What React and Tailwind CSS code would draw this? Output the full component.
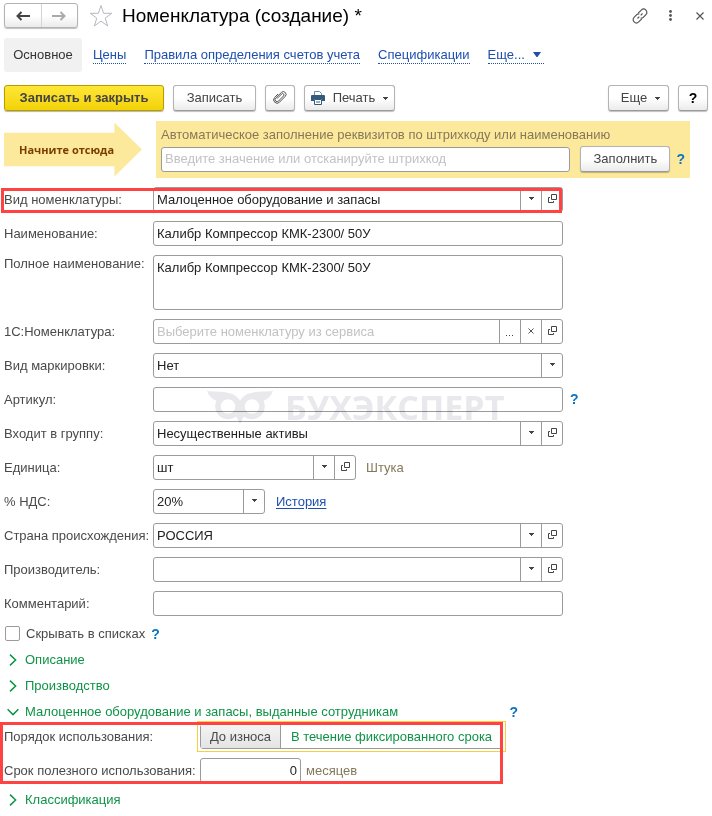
import React, { useState } from 'react';

const FIELD = 'flex h-[25px] rounded-[3px] border border-[#9b9b9b] bg-white overflow-hidden';
const BUTTON =
  'flex h-[26px] items-center justify-center rounded-[3px] border border-[#b3b3b3] border-b-[#9a9a9a] bg-linear-to-b from-white from-50% to-[#ebebeb] text-[#444] shadow-[0_1px_1px_rgba(0,0,0,0.25)]';

const SmallArrow = () => (
  <svg width="5" height="3" viewBox="0 0 5 3" aria-hidden="true">
    <path d="M0 0h5v1H4v1H3v1H2V2H1V1H0z" fill="#444" />
  </svg>
);

const OpenIcon = () => (
  <svg width="9" height="9" viewBox="0 0 9 9" fill="none" stroke="#444" aria-hidden="true">
    <path d="M3.5.5h5v5h-5z" />
    <path d="M2 3.500H.5v5h5V7" />
  </svg>
);

const Help = ({ className = '' }) => (
  <button type="button" aria-label="Справка" className={`text-[14px] font-bold text-[#0b74c4] ${className}`}>
    ?
  </button>
);

// Кнопка внутри поля ввода
const Cell = ({ label, children }) => (
  <button
    type="button"
    aria-label={label}
    className="flex h-full w-[21px] shrink-0 items-center justify-center border-l border-[#9b9b9b] pb-0.5"
  >
    {children}
  </button>
);

const Row = ({ id, label, multiline, children }) => (
  <div className="flex min-h-[25px] items-start">
    <label
      htmlFor={id}
      className={`w-[149px] shrink-0 whitespace-nowrap ${multiline ? 'leading-[18px]' : 'leading-[25px]'}`}
    >
      {label}
    </label>
    {children}
  </div>
);

const TextField = ({ id, value = '' }) => (
  <div className={`${FIELD} min-w-0 flex-1`}>
    <input id={id} defaultValue={value} className="w-full min-w-0 px-[3px] text-[#222] outline-none" />
  </div>
);

const SelectField = ({ id, value = '', open, className = 'min-w-0 flex-1' }) => (
  <div className={`${FIELD} ${className}`}>
    <div className="grid min-w-0 flex-1 grid-cols-[1fr_21px]">
      <select
        id={id}
        defaultValue={value}
        className="col-span-2 col-start-1 row-start-1 min-w-0 appearance-none bg-transparent pl-[3px] text-[#222] outline-none"
      >
        <option>{value}</option>
      </select>
      <span className="pointer-events-none col-start-2 row-start-1 flex items-center justify-center border-l border-[#9b9b9b] pb-0.5">
        <SmallArrow />
      </span>
    </div>
    {open && (
      <Cell label="Открыть">
        <OpenIcon />
      </Cell>
    )}
  </div>
);

const Group = ({ title, opened, onClick }) => (
  <button type="button" onClick={onClick} className="flex h-[26px] items-center text-[#0f9347]">
    <span className="flex w-[21px] justify-start pl-[3px]">
      {opened ? (
        <svg width="12" height="8" viewBox="0 0 12 8" fill="none" stroke="currentColor" strokeWidth="1.5" aria-hidden="true">
          <path d="M.6 1.2 6 6.6l5.4-5.4" />
        </svg>
      ) : (
        <svg width="12" height="12" viewBox="0 0 12 12" fill="none" stroke="currentColor" strokeWidth="1.5" aria-hidden="true">
          <path d="M3 .6 8.6 6 3 11.4" />
        </svg>
      )}
    </span>
    {title}
  </button>
);

const Watermark = () => (
  <div
    aria-hidden="true"
    className="pointer-events-none absolute top-[3px] left-[203px] flex items-center gap-3 text-[#e8e8ed] mix-blend-multiply"
  >
    <svg width="66" height="34" viewBox="0 0 66 34" fill="currentColor">
      <circle cx="21" cy="16.5" r="10" fill="none" stroke="currentColor" strokeWidth="5.5" />
      <circle cx="45" cy="16.5" r="10" fill="none" stroke="currentColor" strokeWidth="5.5" />
      <path d="M0 1c8 1 15 0 22 2 5 1 9 4 11 8 2-4 6-7 11-8 7-2 14-1 22-2-2 5-5 8-10 10L45 6.500c-5 0-9 4-9 9h-6c0-5-4-9-9-9L10 11C5 9 2 6 0 1z" />
      <path d="M28 24l5-5 5 5-5 10z" />
    </svg>
    <span className="font-['Open_Sans',sans-serif] text-[34px] leading-[34px] font-bold">БУХЭКСПЕРТ</span>
  </div>
);

const tabs = ['Цены', 'Правила определения счетов учета', 'Спецификации'];

export default function App() {
  const [usage, setUsage] = useState('wear');
  const [opened, setOpened] = useState(true);

  return (
    <main className="bg-white px-1 pt-[3px] pb-1 font-['Liberation_Sans',Arial,sans-serif] text-[13px] leading-[16px] text-[#4a4a4a]">
      {/* Заголовок */}
      <header className="flex h-[25px] items-center">
        <div className="flex h-[25px] w-[74px] rounded-[3px] border border-[#b3b3b3] bg-linear-to-b from-white from-50% to-[#ebebeb] shadow-[0_1px_1px_rgba(0,0,0,0.25)]">
          <button type="button" aria-label="Назад" className="flex flex-1 items-center justify-center border-r border-[#d5d5d5]">
            <svg width="14" height="10" viewBox="0 0 14 10" fill="none" stroke="#444" strokeWidth="2" aria-hidden="true">
              <path d="M14 5H2M5.5 1 1.5 5l4 4" />
            </svg>
          </button>
          <button type="button" aria-label="Вперед" className="flex flex-1 items-center justify-center">
            <svg width="14" height="10" viewBox="0 0 14 10" fill="none" stroke="#aaa" strokeWidth="2" aria-hidden="true">
              <path d="M0 5h12M8.5 1l4 4-4 4" />
            </svg>
          </button>
        </div>
        <button type="button" aria-label="В избранное" className="ml-[11px]">
          <svg width="24" height="24" viewBox="0 0 24 24" fill="none" stroke="#b4b8be" aria-hidden="true">
            <path d="m12 1.5 2.600 7.800h8.200l-6.600 4.800 2.500 7.900-6.700-4.900L5.300 22l2.500-7.900L1.200 9.300h8.200z" />
          </svg>
        </button>
        <h1 className="ml-[9px] flex-1 text-[19px] text-black">Номенклатура (создание) *</h1>
        <div className="flex items-center">
          <button type="button" aria-label="Получить ссылку">
            <svg width="16" height="16" viewBox="0 0 16 16" fill="none" stroke="#555" strokeWidth="1.200" aria-hidden="true">
              <path d="M6.200 5.200 9.300 2.100a3.200 3.200 0 0 1 4.600 4.600l-2.600 2.600a3.200 3.200 0 0 1-2.600.9" />
              <path d="M9.800 10.800 6.700 13.900a3.200 3.200 0 0 1-4.600-4.600l2.600-2.600a3.200 3.200 0 0 1 2.600-.9" />
              <path d="m5.500 10.500 1.800-1.800M8.700 7.300l1.800-1.800" />
            </svg>
          </button>
          <button type="button" aria-label="Меню" className="ml-[21px]">
            <svg width="3" height="11" viewBox="0 0 3 11" fill="#555" aria-hidden="true">
              <circle cx="1.5" cy="1.5" r="1.400" />
              <circle cx="1.5" cy="5.500" r="1.400" />
              <circle cx="1.5" cy="9.500" r="1.400" />
            </svg>
          </button>
          <button type="button" aria-label="Закрыть" className="mr-1 ml-6">
            <svg width="8" height="8" viewBox="0 0 8 8" stroke="#555" strokeWidth="1.200" aria-hidden="true">
              <path d="m.5.5 7 7M7.500.5l-7 7" />
            </svg>
          </button>
        </div>
      </header>

      {/* Навигация */}
      <nav className="mt-[10px] flex h-[34px] items-center">
        <a href="#main" className="flex h-full w-[78px] items-center justify-center rounded-[3px] bg-[#f1f1f1] text-[#333]">
          Основное
        </a>
        <div className="ml-[11px] flex gap-[18px] text-[#1d4fb0]">
          {tabs.map((tab) => (
            <a key={tab} href="#tab" className="border-b border-dotted border-[#1d4fb0]">
              {tab}
            </a>
          ))}
          <a href="#more" className="flex items-center gap-2 border-b border-dotted border-[#1d4fb0] pr-[3px]">
            Еще...
            <svg width="8" height="5" viewBox="0 0 8 5" fill="currentColor" aria-hidden="true">
              <path d="M0 0h8L4.500 5h-1z" />
            </svg>
          </a>
        </div>
      </nav>

      {/* Командная панель */}
      <div className="mt-[13px] flex items-center">
        <button
          type="button"
          className="h-[26px] w-[160px] rounded-[3px] border border-[#b79d00] bg-linear-to-b from-[#ffe733] to-[#f2d200] font-bold text-[#444] shadow-[0_1px_1px_rgba(0,0,0,0.3)]"
        >
          Записать и закрыть
        </button>
        <button type="button" className={`${BUTTON} ml-[9px] w-[83px]`}>
          Записать
        </button>
        <button type="button" aria-label="Присоединенные файлы" className={`${BUTTON} ml-[9px] w-[30px]`}>
          <svg width="14" height="14" viewBox="0 0 14 14" fill="none" stroke="#555" aria-hidden="true">
            <path d="M4 7.600 8.600 3a1.300 1.300 0 0 1 2 1.900l-5 5.100a2 2 0 0 1-3-2.800l5.700-5.700a2.700 2.700 0 0 1 4 3.800l-5.800 5.900a3.400 3.400 0 0 1-5-4.600L5 3" />
          </svg>
        </button>
        <button type="button" className={`${BUTTON} ml-[9px] w-[91px] gap-2`}>
          <svg width="14" height="14" viewBox="0 0 14 14" aria-hidden="true">
            <path d="M3.500 5V.5h5l2 2V5" fill="#fff" stroke="#6f8aa3" />
            <path d="M1 4h12a1 1 0 0 1 1 1v5h-3V8H3v2H0V5a1 1 0 0 1 1-1z" fill="#34597d" />
            <path d="M3.500 8.500h7v5h-7z" fill="#fff" stroke="#34597d" />
            <path d="M5 11h4" stroke="#34597d" />
          </svg>
          <span>Печать</span>
          <SmallArrow />
        </button>
        <button type="button" className={`${BUTTON} ml-auto w-[61px] gap-2 pl-1`}>
          <span>Еще</span>
          <SmallArrow />
        </button>
        <button type="button" className={`${BUTTON} ml-[9px] w-[30px] text-[14px] font-bold text-black`}>
          ?
        </button>
      </div>

      {/* Автозаполнение */}
      <section className="mt-[10px] flex items-center gap-[14px]">
        <div className="flex h-[54px] w-[138px] shrink-0 items-center bg-[#fde99b] pl-[15px] font-['Open_Sans',sans-serif] text-[11px] font-bold text-[#7a3d00] [clip-path:polygon(0_19%,80%_19%,80%_0,100%_50%,80%_100%,80%_81%,0_81%)]">
          Начните отсюда
        </div>
        <div className="h-[57px] max-w-[534px] flex-1 bg-[#fde99b] px-[5px] pt-[6px] text-[#85795a]">
          <label htmlFor="barcode" className="block whitespace-nowrap">
            Автоматическое заполнение реквизитов по штрихкоду или наименованию
          </label>
          <div className="mt-[3px] flex items-center">
            <div className={`${FIELD} min-w-0 flex-1`}>
              <input
                id="barcode"
                placeholder="Введите значение или отсканируйте штрихкод"
                className="w-full px-[3px] outline-none placeholder:text-[#c2c2c2]"
              />
            </div>
            <button type="button" className={`${BUTTON} ml-[10px] w-[90px]`}>
              Заполнить
            </button>
            <Help className="ml-[6px]" />
          </div>
        </div>
      </section>

      {/* Реквизиты */}
      <form className="mt-[9px] flex max-w-[559px] flex-col gap-[9px]">
        <div className="relative">
          <Row id="kind" label="Вид номенклатуры:">
            <SelectField id="kind" value="Малоценное оборудование и запасы" open />
          </Row>
          <div className="pointer-events-none absolute top-px right-px -bottom-px -left-[3px] border-3 border-[#ff4242]" />
        </div>
        <Row id="name" label="Наименование:">
          <TextField id="name" value="Калибр Компрессор КМК-2300/ 50У" />
        </Row>
        <Row id="fullname" label="Полное наименование:" multiline>
          <textarea
            id="fullname"
            defaultValue="Калибр Компрессор КМК-2300/ 50У"
            className="h-[55px] min-w-0 flex-1 resize-none rounded-[3px] border border-[#9b9b9b] px-[3px] py-1 text-[#222] outline-none"
          />
        </Row>
        <Row id="service" label="1С:Номенклатура:">
          <div className={`${FIELD} min-w-0 flex-1`}>
            <input
              id="service"
              placeholder="Выберите номенклатуру из сервиса"
              className="min-w-0 flex-1 px-[3px] outline-none placeholder:text-[#c2c2c2]"
            />
            <Cell label="Выбрать">
              <svg width="8" height="10" viewBox="0 0 8 10" fill="#444" aria-hidden="true">
                <path d="M0 9h1v1H0zM3 9h1v1H3zM6 9h1v1H6z" />
              </svg>
            </Cell>
            <Cell label="Очистить">
              <svg width="6" height="6" viewBox="0 0 6 6" stroke="#555" aria-hidden="true">
                <path d="m.5.5 5 5M5.500.5l-5 5" />
              </svg>
            </Cell>
            <Cell label="Открыть">
              <OpenIcon />
            </Cell>
          </div>
        </Row>
        <Row id="marking" label="Вид маркировки:">
          <SelectField id="marking" value="Нет" />
        </Row>
        <div className="relative">
          <Row id="article" label="Артикул:">
            <TextField id="article" />
          </Row>
          <Help className="absolute top-1 left-full ml-[7px]" />
          <Watermark />
        </div>
        <Row id="group" label="Входит в группу:">
          <SelectField id="group" value="Несущественные активы" open />
        </Row>
        <Row id="unit" label="Единица:">
          <SelectField id="unit" value="шт" open className="w-[203px]" />
          <span className="ml-[10px] leading-[25px] text-[#85795a]">Штука</span>
        </Row>
        <Row id="vat" label="% НДС:">
          <SelectField id="vat" value="20%" className="w-[112px]" />
          <a href="#history" className="ml-[11px] leading-[25px] text-[#1d4fb0] underline underline-offset-2">
            История
          </a>
        </Row>
        <Row id="country" label="Страна происхождения:">
          <SelectField id="country" value="РОССИЯ" open />
        </Row>
        <Row id="maker" label="Производитель:">
          <SelectField id="maker" open />
        </Row>
        <Row id="comment" label="Комментарий:">
          <TextField id="comment" />
        </Row>
      </form>

      <div className="mt-[9px] flex h-[17px] items-center">
        <input
          id="hide"
          type="checkbox"
          className="ml-px h-[15px] w-[15px] appearance-none rounded-[2px] border border-[#9b9b9b] checked:bg-[#0f9347]"
        />
        <label htmlFor="hide" className="ml-[6px]">
          Скрывать в списках
        </label>
        <Help className="ml-[6px]" />
      </div>

      {/* Группы */}
      <div className="mt-[5px] flex flex-col items-start">
        <Group title="Описание" />
        <Group title="Производство" />
        <div className="flex w-full max-w-[514px] items-center justify-between">
          <Group title="Малоценное оборудование и запасы, выданные сотрудникам" opened={opened} onClick={() => setOpened(!opened)} />
          <Help />
        </div>
        {opened && (
          <div className="relative -mt-1 mb-1 flex w-full max-w-[499px] flex-col gap-[6px]">
            <div className="flex items-center">
              <span id="usage" className="w-[193px] shrink-0">
                Порядок использования:
              </span>
              <div className="shrink-0 border border-[#f7cf3c] p-[2px]">
                <div role="group" aria-labelledby="usage" className="flex h-[25px] rounded-[3px] border border-[#9b9b9b] bg-white">
                  <button
                    type="button"
                    onClick={() => setUsage('wear')}
                    className={`w-[80px] border-r border-[#9b9b9b] ${usage === 'wear' ? 'bg-linear-to-b from-[#f4f4f4] to-[#e4e4e4]' : 'text-[#0f9347]'}`}
                  >
                    До износа
                  </button>
                  <button
                    type="button"
                    onClick={() => setUsage('fixed')}
                    className={`w-[221px] whitespace-nowrap ${usage === 'fixed' ? 'bg-linear-to-b from-[#f4f4f4] to-[#e4e4e4]' : 'text-[#0f9347]'}`}
                  >
                    В течение фиксированного срока
                  </button>
                </div>
              </div>
            </div>
            <div className="flex items-center">
              <label htmlFor="term" className="w-[196px] shrink-0 whitespace-nowrap">
                Срок полезного использования:
              </label>
              <input
                id="term"
                defaultValue="0"
                className="h-[25px] w-[101px] rounded-[3px] border border-[#9b9b9b] px-[3px] text-right text-[#222] outline-none"
              />
              <span className="ml-[5px] text-[#85795a]">месяцев</span>
            </div>
            <div className="pointer-events-none absolute top-px right-0 -bottom-px -left-1 border-3 border-[#ff4242]" />
          </div>
        )}
        <Group title="Классификация" />
      </div>
    </main>
  );
}
